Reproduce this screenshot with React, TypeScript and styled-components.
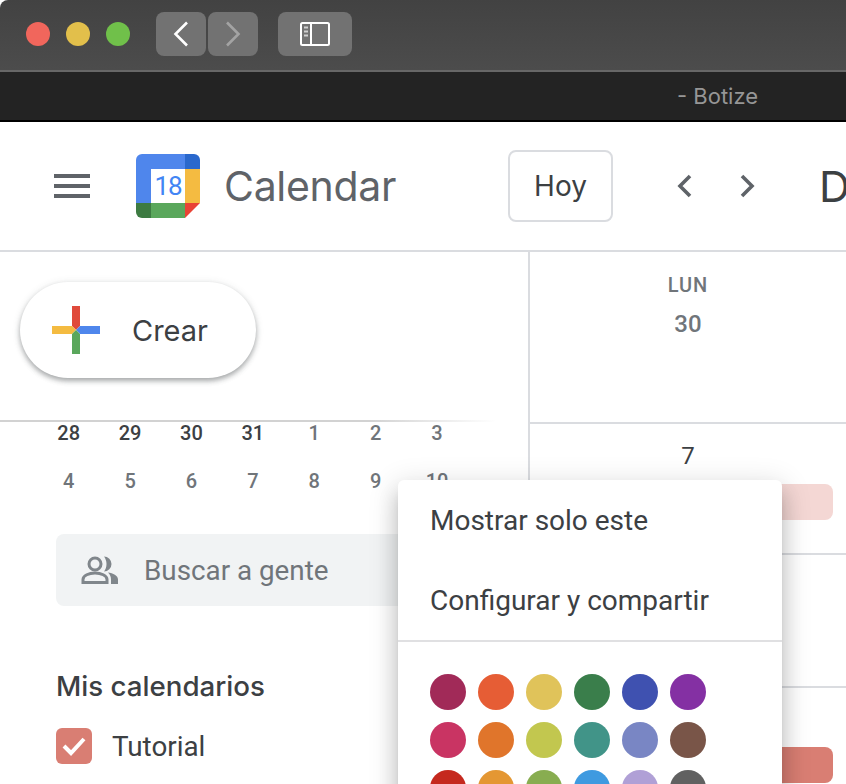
import React from 'react'
import styled, { createGlobalStyle } from 'styled-components'

const GlobalStyle = createGlobalStyle`
  html, body { margin: 0; padding: 0; background: #fff; }
  body { font-family: Roboto, "Liberation Sans", sans-serif; }
  * { box-sizing: border-box; }
`

const swatches = [
  '#a12a58', '#e65d35', '#e0c35a', '#3a7e4b', '#3f51b0', '#8430a3',
  '#c93463', '#e0752b', '#c2c74f', '#419488', '#7986c4', '#795548',
  '#c5291e', '#e49733', '#88ad50', '#3f9ae0', '#b0a0d6', '#616161',
]

const weekOne = [
  { n: 28, dark: true }, { n: 29, dark: true }, { n: 30, dark: true }, { n: 31, dark: true },
  { n: 1 }, { n: 2 }, { n: 3 },
]
const weekTwo = [4, 5, 6, 7, 8, 9, 10].map((n) => ({ n, dark: false }))

export default function App() {
  return (
    <Page>
      <GlobalStyle />
      <TitleBar>
        <Lights>
          <Light $color="#f1665c" />
          <Light $color="#e2bf4b" />
          <Light $color="#70c04a" />
        </Lights>
        <NavGroup>
          <ChromeButton $width={50}>
            <svg width="16" height="26" viewBox="0 0 16 26" fill="none" stroke="#fff" strokeWidth="2.6">
              <path d="M14 1.5 2.5 13 14 24.5" />
            </svg>
          </ChromeButton>
          <ChromeButton $width={50}>
            <svg width="16" height="26" viewBox="0 0 16 26" fill="none" stroke="#a3a3a3" strokeWidth="2.6">
              <path d="M2 1.5 13.5 13 2 24.5" />
            </svg>
          </ChromeButton>
        </NavGroup>
        <ChromeButton $width={74}>
          <svg width="30" height="24" viewBox="0 0 30 24" fill="none" stroke="#fff" strokeWidth="2">
            <rect x="1" y="1" width="28" height="22" rx="1.5" />
            <path d="M11 1v22" />
            <path d="M4 5.5h4M4 9.5h4M4 13.5h4" stroke="#d0d0d0" />
          </svg>
        </ChromeButton>
      </TitleBar>
      <TabBar>
        <TabTitle>- Botize</TabTitle>
      </TabBar>
      <AppHeader>
        <Burger>
          <span />
          <span />
          <span />
        </Burger>
        <svg width="64" height="64" viewBox="0 0 64 64">
          <path d="M6 0h43v15H15v34H0V6a6 6 0 0 1 6-6z" fill="#4f86ec" />
          <path d="M49 0h9a6 6 0 0 1 6 6v9H49z" fill="#2a68cc" />
          <rect x="49" y="15" width="15" height="34" fill="#f4bb41" />
          <rect x="15" y="49" width="34" height="15" fill="#5aa75c" />
          <path d="M0 49h15v15H6a6 6 0 0 1-6-6z" fill="#3d7b42" />
          <path d="M49 49h15L49 64z" fill="#e94335" />
          <rect x="15" y="15" width="34" height="34" fill="#fff" />
          <LogoDigits x="32" y="41" textAnchor="middle">18</LogoDigits>
        </svg>
        <Brand>Calendar</Brand>
        <TodayButton>Hoy</TodayButton>
        <Arrows>
          <svg width="16" height="24" viewBox="0 0 16 24" fill="none" stroke="#5f6368" strokeWidth="3.6">
            <path d="M14 2 4 12l10 10" />
          </svg>
          <svg width="16" height="24" viewBox="0 0 16 24" fill="none" stroke="#5f6368" strokeWidth="3.6">
            <path d="M2 2l10 10L2 22" />
          </svg>
        </Arrows>
        <PeriodLabel>D</PeriodLabel>
      </AppHeader>
      <Body>
        <Sidebar>
          <CreateArea>
            <CreateButton>
              <svg width="48" height="48" viewBox="0 0 48 48">
                <path d="M20 0h8v20l-4 4-4-4z" fill="#e04a3b" />
                <path d="M0 20h20l4 4-4 4H0z" fill="#f4bb41" />
                <path d="M28 20h20v8H28l-4-4z" fill="#4f86ec" />
                <path d="M20 28l4-4 4 4v20h-8z" fill="#5aa75c" />
              </svg>
              Crear
            </CreateButton>
          </CreateArea>
          <AreaShade />
          <SidebarScroll>
            <MiniCalendar>
              {[...weekOne, ...weekTwo].map((d, i) => (
                <MiniDay key={i} $dark={!!d.dark}>{d.n}</MiniDay>
              ))}
            </MiniCalendar>
            <PeopleSearch>
              <svg width="38" height="28" viewBox="0 0 38 28" fill="#80868b">
                <circle cx="14" cy="8" r="6" fill="none" stroke="#80868b" strokeWidth="3" />
                <path d="M2 26.5v-3c0-4 6-6.5 12-6.5s12 2.5 12 6.5v3z" fill="none" stroke="#80868b" strokeWidth="3" />
                <path d="M23 0.5a7.5 7.5 0 0 1 0 15c1.5-2 2.5-4.5 2.5-7.5S24.5 2.5 23 0.5z" />
                <path d="M27 16.5c5 .5 10 3 10 7V28h-7v-4.5c0-3-1-5-3-7z" />
              </svg>
              Buscar a gente
            </PeopleSearch>
            <SectionTitle>Mis calendarios</SectionTitle>
            <CalendarRow>
              <CheckBox>
                <svg width="24" height="20" viewBox="0 0 24 20" fill="none" stroke="#fff" strokeWidth="4">
                  <path d="M2 10l7 7L22 3" />
                </svg>
              </CheckBox>
              Tutorial
            </CalendarRow>
          </SidebarScroll>
        </Sidebar>
        <DayColumn>
          <DayHead>
            <DayLabel>
              <DayName>LUN</DayName>
              <DayDate>30</DayDate>
            </DayLabel>
          </DayHead>
          <WeekCell $height={131}>
            <WeekNumber>7</WeekNumber>
            <EventChip $color="#f4d7d4" />
          </WeekCell>
          <WeekCell $height={133} />
          <WeekCell $height={96} $last>
            <EventChip $color="#d97e73" $top={59} />
          </WeekCell>
        </DayColumn>
      </Body>
      <ContextMenu>
        <MenuItem>Mostrar solo este</MenuItem>
        <MenuItem>Configurar y compartir</MenuItem>
        <MenuDivider />
        <SwatchGrid>
          {swatches.map((c) => (
            <Swatch key={c} $color={c} />
          ))}
        </SwatchGrid>
      </ContextMenu>
    </Page>
  )
}

const Page = styled.div`
  position: relative;
  width: 846px;
  height: 784px;
  overflow: hidden;
  background: #fff;
`

const TitleBar = styled.div`
  display: flex;
  align-items: center;
  height: 72px;
  padding: 0 0 2px 26px;
  background: linear-gradient(#424242, #4c4c4c);
  border-bottom: 2px solid #676767;
  border-top-left-radius: 8px;
`

const Lights = styled.div`
  display: flex;
  gap: 16px;
  margin-right: 26px;
`

const Light = styled.span<{ $color: string }>`
  width: 24px;
  height: 24px;
  border-radius: 50%;
  background: ${(p) => p.$color};
`

const NavGroup = styled.div`
  display: flex;
  gap: 2px;
  margin-right: 20px;
`

const ChromeButton = styled.div<{ $width: number }>`
  display: flex;
  align-items: center;
  justify-content: center;
  width: ${(p) => p.$width}px;
  height: 44px;
  border-radius: 8px;
  background: #727272;
`

const TabBar = styled.div`
  display: flex;
  align-items: center;
  height: 50px;
  padding-left: 677px;
  background: #232323;
  border-bottom: 2px solid #000;
`

const TabTitle = styled.span`
  font-family: Inter, sans-serif;
  font-size: 22px;
  color: #969696;
`

const AppHeader = styled.header`
  display: flex;
  align-items: center;
  height: 130px;
  padding-left: 54px;
  border-bottom: 2px solid #dadce0;

  & > * {
    flex: none;
  }
`

const Burger = styled.div`
  display: flex;
  flex-direction: column;
  gap: 6px;
  width: 36px;
  margin-right: 46px;

  span {
    height: 4px;
    background: #5f6368;
  }
`

const LogoDigits = styled.text`
  font-family: Roboto, sans-serif;
  font-size: 26px;
  letter-spacing: -1px;
  fill: #4285f4;
`

const Brand = styled.span`
  width: 308px;
  padding-left: 24px;
  font-family: Inter, sans-serif;
  font-size: 41px;
  letter-spacing: -0.3px;
  color: #5f6368;
`

const TodayButton = styled.div`
  display: flex;
  align-items: center;
  justify-content: center;
  width: 105px;
  height: 72px;
  border: 2px solid #dadce0;
  border-radius: 8px;
  font-family: Inter, sans-serif;
  font-size: 28px;
  color: #3c4043;
`

const Arrows = styled.div`
  display: flex;
  gap: 48px;
  margin: 0 63px;
`

const PeriodLabel = styled.span`
  font-family: Inter, sans-serif;
  font-size: 43px;
  color: #3c4043;
`

const Body = styled.div`
  display: flex;
  height: 534px;
`

const Sidebar = styled.aside`
  display: flex;
  flex-direction: column;
  flex: none;
  width: 530px;
  border-right: 2px solid #dadce0;
`

const CreateArea = styled.div`
  flex: none;
  height: 168px;
  padding: 30px 0 0 20px;
`

const CreateButton = styled.div`
  display: flex;
  align-items: center;
  gap: 32px;
  width: 236px;
  height: 96px;
  padding-left: 32px;
  border-radius: 48px;
  background: #fff;
  box-shadow: 0 3px 5px rgba(60, 64, 67, 0.4), 0 1px 8px rgba(60, 64, 67, 0.12);
  font-family: Inter, sans-serif;
  font-size: 29px;
  color: #3c4043;
`

const AreaShade = styled.div`
  flex: none;
  height: 2px;
  background: linear-gradient(to right, #d2d2d2 70%, rgba(214, 214, 214, 0) 94%);
`

const SidebarScroll = styled.div`
  flex: 1;
  min-height: 0;
  overflow: hidden;
  padding-left: 38px;
`

const MiniCalendar = styled.div`
  display: grid;
  grid-template-columns: repeat(7, 61.4px);
  grid-auto-rows: 48px;
  margin-top: -13px;
`

const MiniDay = styled.div<{ $dark: boolean }>`
  display: flex;
  align-items: center;
  justify-content: center;
  font-size: 20px;
  line-height: 20px;
  font-weight: 500;
  color: ${(p) => (p.$dark ? '#3c4043' : '#70757a')};
`

const PeopleSearch = styled.div`
  display: flex;
  align-items: center;
  gap: 25px;
  width: 416px;
  height: 72px;
  margin: 29px 0 0 18px;
  padding-left: 25px;
  border-radius: 8px;
  background: #f1f3f4;
  font-size: 27.8px;
  color: #70757a;
`

const SectionTitle = styled.div`
  margin: 63px 0 0 18px;
  font-family: Inter, sans-serif;
  font-size: 27.7px;
  font-weight: 500;
  line-height: 34px;
  color: #3c4043;
`

const CalendarRow = styled.div`
  display: flex;
  align-items: center;
  gap: 20px;
  height: 36px;
  margin: 25px 0 0 18px;
  font-size: 27.8px;
  color: #3c4043;
`

const CheckBox = styled.span`
  display: flex;
  align-items: center;
  justify-content: center;
  width: 36px;
  height: 36px;
  border-radius: 6px;
  background: #d97e73;
`

const DayColumn = styled.section`
  flex: 1;
  display: flex;
  flex-direction: column;
`

const DayHead = styled.div`
  flex: none;
  height: 172px;
  padding-top: 20px;
  border-bottom: 2px solid #dadce0;
`

const DayLabel = styled.div`
  width: 316px;
  text-align: center;
`

const DayName = styled.div`
  font-size: 20px;
  font-weight: 500;
  line-height: 26px;
  letter-spacing: 1px;
  color: #70757a;
`

const DayDate = styled.div`
  margin-top: 12px;
  font-size: 24px;
  font-weight: 500;
  line-height: 28px;
  color: #70757a;
`

const WeekCell = styled.div<{ $height: number; $last?: boolean }>`
  position: relative;
  flex: none;
  height: ${(p) => p.$height}px;
  border-bottom: ${(p) => (p.$last ? 'none' : '2px solid #dadce0')};
`

const WeekNumber = styled.div`
  width: 316px;
  padding-top: 18px;
  text-align: center;
  font-size: 24px;
  line-height: 28px;
  color: #3c4043;
`

const EventChip = styled.div<{ $color: string; $top?: number }>`
  position: absolute;
  top: ${(p) => p.$top ?? 60}px;
  left: 10px;
  right: 13px;
  height: 36px;
  border-radius: 8px;
  background: ${(p) => p.$color};
`

const ContextMenu = styled.div`
  position: absolute;
  top: 480px;
  left: 398px;
  width: 384px;
  height: 340px;
  border-radius: 6px;
  background: #fff;
  box-shadow: 0 16px 20px 2px rgba(0, 0, 0, 0.14), 0 6px 28px 4px rgba(0, 0, 0, 0.12), 0 10px 10px -6px rgba(0, 0, 0, 0.2);
`

const MenuItem = styled.div`
  display: flex;
  align-items: center;
  height: 80px;
  padding-left: 32px;
  font-size: 28px;
  color: #3c4043;
`

const MenuDivider = styled.div`
  height: 2px;
  background: #e0e0e2;
`

const SwatchGrid = styled.div`
  display: grid;
  grid-template-columns: repeat(6, 36px);
  gap: 12px;
  padding: 32px 0 0 32px;
`

const Swatch = styled.span<{ $color: string }>`
  width: 36px;
  height: 36px;
  border-radius: 50%;
  background: ${(p) => p.$color};
`
